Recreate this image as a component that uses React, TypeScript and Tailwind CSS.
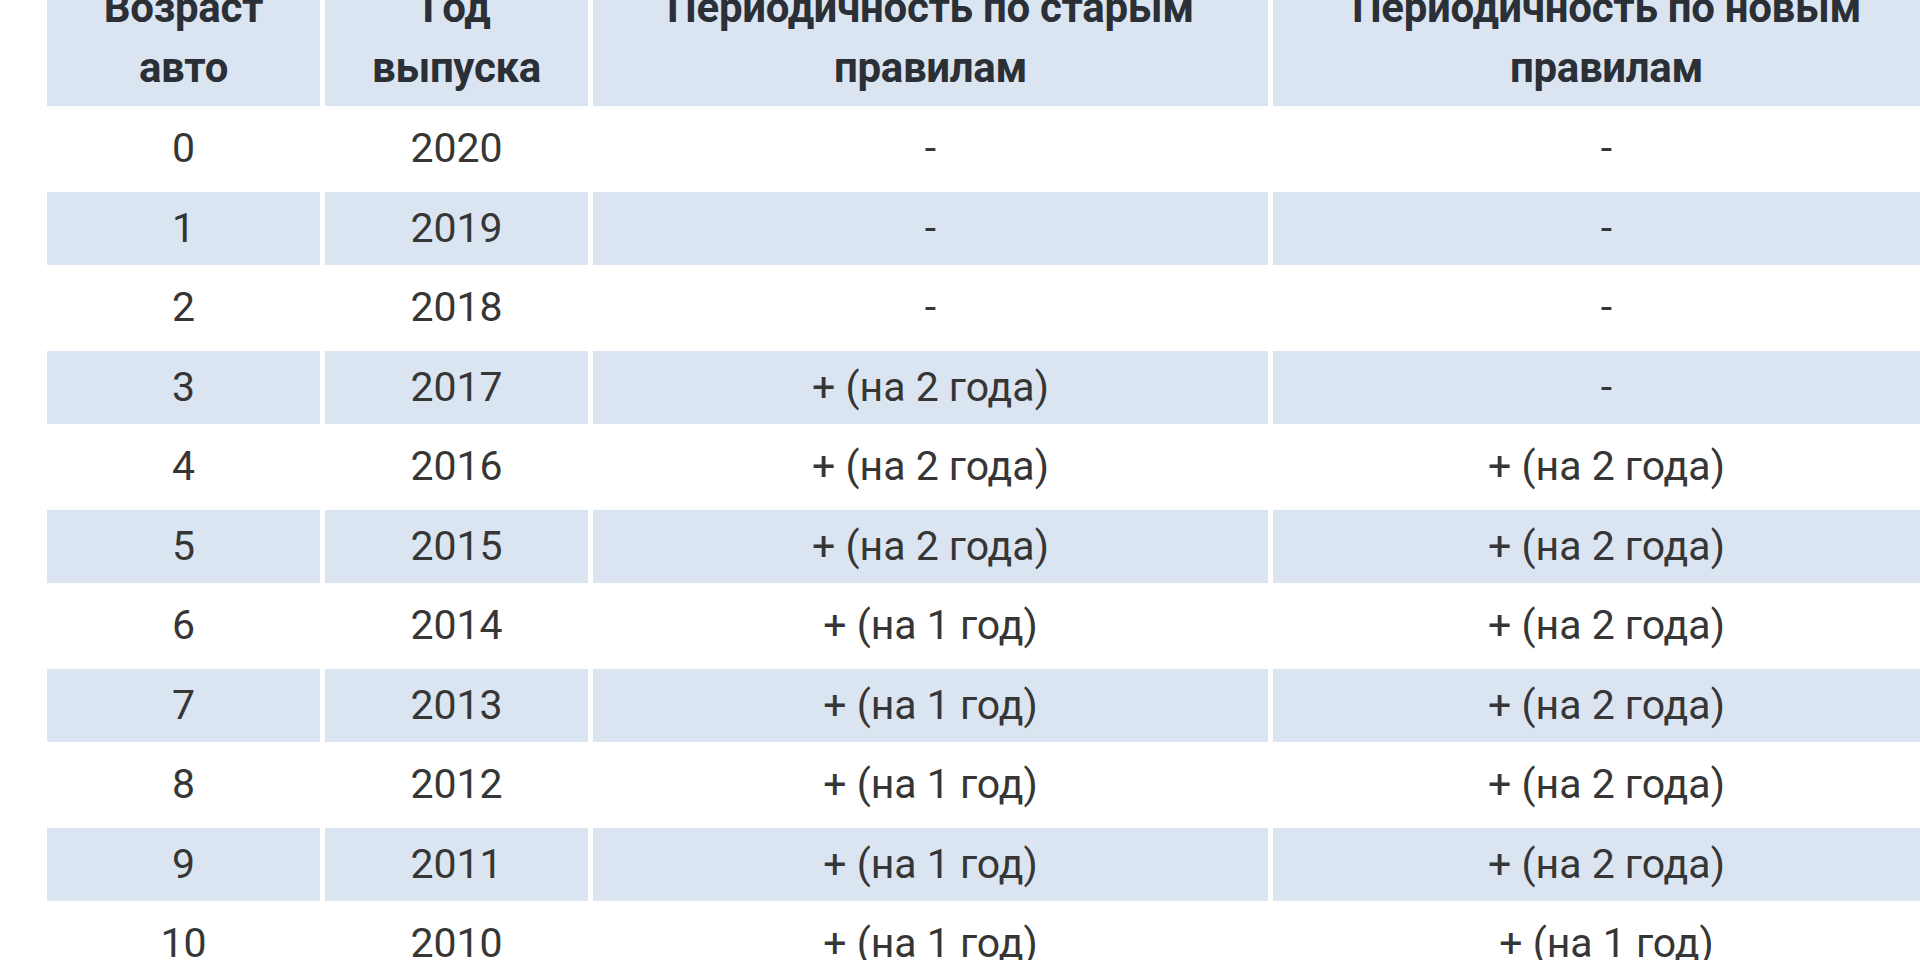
const headers = [
  ["Возраст", "авто"],
  ["Год", "выпуска"],
  ["Периодичность по старым", "правилам"],
  ["Периодичность по новым", "правилам"],
];

const rows: [string, string, string, string][] = [
  ["0", "2020", "-", "-"],
  ["1", "2019", "-", "-"],
  ["2", "2018", "-", "-"],
  ["3", "2017", "+ (на 2 года)", "-"],
  ["4", "2016", "+ (на 2 года)", "+ (на 2 года)"],
  ["5", "2015", "+ (на 2 года)", "+ (на 2 года)"],
  ["6", "2014", "+ (на 1 год)", "+ (на 2 года)"],
  ["7", "2013", "+ (на 1 год)", "+ (на 2 года)"],
  ["8", "2012", "+ (на 1 год)", "+ (на 2 года)"],
  ["9", "2011", "+ (на 1 год)", "+ (на 2 года)"],
  ["10", "2010", "+ (на 1 год)", "+ (на 1 год)"],
];

export default function App() {
  return (
    <div
      className="h-[960px] w-full overflow-hidden bg-white"
      style={{ fontFamily: "Roboto, 'Noto Sans', sans-serif" }}
    >
      <div className="-mt-[30px] ml-[47px] grid w-[1893px] grid-cols-[273px_263px_675px_667px] gap-x-[5px] gap-y-[6.5px]">
        {headers.map((h, i) => (
          <div
            key={i}
            className="flex flex-col items-center justify-center bg-[#dbe5f1] py-[8px] text-center text-[42px] font-bold leading-[60px] tracking-[-0.3px] text-[#2b2f36]"
          >
            <span className="whitespace-nowrap">{h[0]}</span>
            <span className="whitespace-nowrap">{h[1]}</span>
          </div>
        ))}
        {rows.map((r, ri) =>
          r.map((c, ci) => (
            <div
              key={`${ri}-${ci}`}
              className={`flex h-[73px] items-center justify-center whitespace-nowrap text-[41px] text-[#363636] ${
                ri % 2 === 1 ? "bg-[#dbe5f1]" : "bg-white"
              }`}
            >
              {c}
            </div>
          ))
        )}
      </div>
    </div>
  );
}
